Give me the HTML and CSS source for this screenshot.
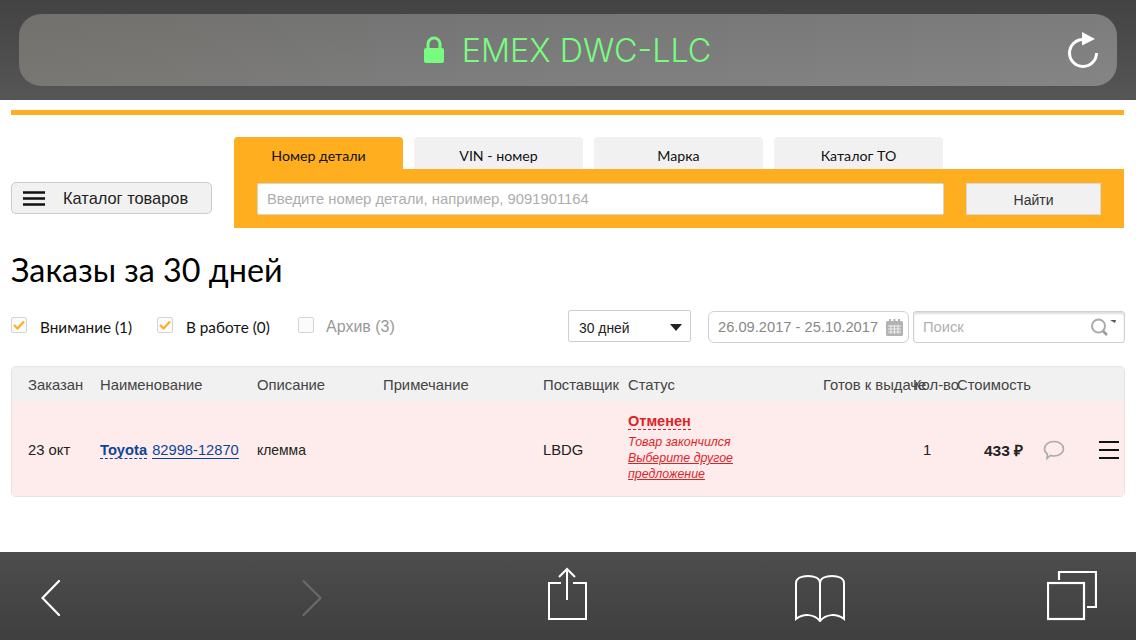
FILE: index.html
```html
<!DOCTYPE html>
<html lang="ru">
<head>
<meta charset="utf-8">
<title>Заказы за 30 дней</title>
<link rel="stylesheet" href="styles.css">
</head>
<body>
<header class="topbar">
  <div class="urlbar">
    <div class="site">
      <svg class="lock" width="22" height="28" viewBox="0 0 22 28"><path d="M5 13V8a6 6 0 0 1 12 0v5" fill="none" stroke="#78fc80" stroke-width="3"/><rect x="1" y="12" width="20" height="15" rx="2" fill="#78fc80"/></svg>
      <span class="site-name">EMEX DWC-LLC</span>
    </div>
    <svg class="reload" width="32" height="36" viewBox="0 0 32 36"><path d="M15 7.500A13.500 13.500 0 1 0 28.500 21" fill="none" stroke="#fff" stroke-width="3"/><path d="M14 0l13 7-13 6.500z" fill="#fff"/></svg>
  </div>
</header>

<main class="page">
  <div class="rule"></div>
  <section class="search-row">
    <button class="catalog-btn">
      <svg width="22" height="15" viewBox="0 0 22 15"><path d="M0 1.500h22M0 7.500h22M0 13.500h22" stroke="#111" stroke-width="2.400"/></svg>
      <span>Каталог товаров</span>
    </button>
    <div class="search-box">
      <div class="tabs">
        <div class="tab tab-active">Номер детали</div>
        <div class="tab">VIN - номер</div>
        <div class="tab">Марка</div>
        <div class="tab">Каталог ТО</div>
      </div>
      <div class="search-panel">
        <div class="part-input">Введите номер детали, например, 9091901164</div>
        <div class="find-btn">Найти</div>
      </div>
    </div>
  </section>

  <h1 class="title">Заказы за 30 дней</h1>

  <section class="filters">
    <div class="checks">
      <label class="check check-1"><span class="box"><svg width="12" height="10" viewBox="0 0 12 10"><path d="M1 5l3.500 3.500L11 1.500" fill="none" stroke="#ffae1f" stroke-width="2.200"/></svg></span>Внимание (1)</label>
      <label class="check check-2"><span class="box"><svg width="12" height="10" viewBox="0 0 12 10"><path d="M1 5l3.500 3.500L11 1.500" fill="none" stroke="#ffae1f" stroke-width="2.200"/></svg></span>В работе (0)</label>
      <label class="check check-off"><span class="box"></span>Архив (3)</label>
    </div>
    <div class="controls">
      <div class="select">30 дней<span class="caret"></span></div>
      <div class="dates">26.09.2017 - 25.10.2017
        <svg width="17" height="17" viewBox="0 0 17 17"><rect y="2" width="17" height="15" rx="1.500" fill="#b3b3b3"/><path d="M4 0v4M8.500 0v4M13 0v4" stroke="#b3b3b3" stroke-width="2"/><path d="M2 7h13M2 10h13M2 13h13M5 6v9M8.500 6v9M12 6v9" stroke="#eee" stroke-width="1"/></svg>
      </div>
      <div class="find">Поиск
        <svg width="34" height="18" viewBox="0 0 34 18"><circle cx="8.500" cy="8" r="6.500" fill="none" stroke="#aaa" stroke-width="2"/><path d="M13 13l4 4" stroke="#999" stroke-width="2.500"/><path d="M20 2h6l-1 3z" fill="#555"/></svg>
      </div>
    </div>
  </section>

  <section class="orders">
    <div class="grid grid-head">
      <div>Заказан</div><div>Наименование</div><div>Описание</div><div>Примечание</div><div>Поставщик</div><div>Статус</div><div class="nowrap">Готов к выдаче</div><div class="nowrap">Кол-во</div><div>Стоимость</div>
    </div>
    <div class="grid grid-row">
      <div>23 окт</div>
      <div class="part"><a class="brand">Toyota</a> <a class="number">82998-12870</a></div>
      <div class="desc">клемма</div>
      <div></div>
      <div>LBDG</div>
      <div class="status">
        <a class="state">Отменен</a>
        <p class="note">Товар закончился</p>
        <a class="note note-link">Выберите другое<br>предложение</a>
      </div>
      <div></div>
      <div class="qty">1</div>
      <div class="cost">
        <b class="price">433 ₽</b>
        <svg class="bubble" width="22" height="20" viewBox="0 0 22 20"><path d="M11 1.500c5.300 0 9.500 3.300 9.500 7.300S16.300 16 11 16c-1.300 0-2.500-.2-3.600-.5L4 18.500l.4-4.300C2.500 12.900 1.500 11 1.500 8.800 1.500 4.800 5.700 1.500 11 1.500z" fill="none" stroke="#aaa" stroke-width="1.600"/></svg>
        <svg class="row-menu" width="20" height="18" viewBox="0 0 20 18"><path d="M0 1h20M0 9h20M0 17h20" stroke="#111" stroke-width="2"/></svg>
      </div>
    </div>
  </section>
</main>

<footer class="toolbar">
  <svg class="tool-back" width="20" height="36" viewBox="0 0 20 36"><path d="M18 1L1.500 18 18 35" fill="none" stroke="#fff" stroke-width="2.200" stroke-linecap="round"/></svg>
  <svg class="tool-next" width="20" height="36" viewBox="0 0 20 36"><path d="M1.500 1L18.500 18 1.500 35" fill="none" stroke="#6a6a6a" stroke-width="2.200" stroke-linecap="round"/></svg>
  <svg class="tool-share" width="40" height="54" viewBox="0 0 40 54"><path d="M13 16H1v36h37V16H25M19 33V2M11 10l8-8 8 8" fill="none" stroke="#fff" stroke-width="2"/></svg>
  <svg class="tool-book" width="50" height="48" viewBox="0 0 50 48"><path d="M25 47V9C25 4 19 2 13 2 7 2 1 4 1 9v36c8-6 18-5 24 2 6-7 16-8 24-2V9c0-5-6-7-12-7s-12 2-12 7" fill="none" stroke="#fff" stroke-width="2"/></svg>
  <svg class="tool-tabs" width="50" height="50" viewBox="0 0 50 50"><path d="M12 9V1h37v35h-9" fill="none" stroke="#fff" stroke-width="2.200"/><rect x="1" y="12" width="36" height="36" fill="none" stroke="#fff" stroke-width="2.200"/></svg>
</footer>
</body>
</html>
```
FILE: styles.css
```css
* { box-sizing: border-box; }
html, body { margin: 0; height: 100%; }
body {
  width: 1136px; height: 640px; overflow: hidden;
  display: flex; flex-direction: column;
  font-family: "Liberation Sans", Arial, sans-serif;
  background: #fff; color: #222;
}
.topbar {
  height: 100px; flex: none; padding: 14px 19px;
  background: linear-gradient(180deg, #434343, #565656);
}
.urlbar {
  height: 72px; width: 1098px; border-radius: 22px;
  background: linear-gradient(90deg, rgba(120, 115, 100, .3), rgba(120, 115, 100, 0) 35%), linear-gradient(175deg, #707070, #858585);
  position: relative; display: flex; align-items: center; justify-content: center;
}
.site { display: flex; align-items: center; gap: 17px; padding-right: 2px; }
.lock { display: block; }
.site-name { font: 300 32.300px/40px Inter, sans-serif; color: #78fc80; padding-top: 1px; }
.reload { position: absolute; right: 17px; top: 18px; }

.page { flex: 1; padding: 10px 11px 0 11px; min-height: 0; }
.rule { height: 5px; background: #ffae1f; width: 1113px; }
.search-row { display: flex; align-items: flex-end; gap: 22px; margin-top: 22px; }
.catalog-btn {
  width: 201px; height: 32px; margin-bottom: 14px; padding: 0 0 0 11px;
  display: flex; align-items: center; gap: 18px;
  background: #f1f1f1; border: 1px solid #cfcbc0; border-radius: 5px;
  font: 16.400px "Liberation Sans", Arial, sans-serif; color: #222;
}
.search-box { width: 890px; }
.tabs { display: flex; gap: 11px; height: 32px; }
.tab {
  width: 169px; height: 32px; border-radius: 4px 4px 0 0; background: #f1f1f1;
  text-align: center; font: 14.200px/38px Lato, "Open Sans", sans-serif; color: #111;
}
.tab-active { background: #ffae1f; }
.search-panel {
  height: 59px; background: #ffae1f; padding: 14px 23px 0 23px;
  display: flex; gap: 22px;
}
.part-input {
  width: 688px; height: 32px; background: #fff; border: 1px solid #d5d5d5; border-radius: 2px;
  padding-left: 9px; font-size: 14.800px; line-height: 31px; color: #adadad;
}
.find-btn {
  width: 135px; height: 32px; background: #f1f1f1; border: 1px solid #d8d8d8;
  text-align: center; font-size: 14px; line-height: 32px; color: #333;
}
.title {
  margin: 23px 0 0; font: 400 32.300px/38px Lato, "Open Sans", sans-serif; color: #000;
}
.filters { display: flex; justify-content: space-between; margin-top: 21px; height: 33px; }
.checks { display: flex; align-items: center; font: 15.300px Lato, "Open Sans", sans-serif; color: #111; }
.check { display: flex; align-items: center; }
.check-1 { width: 146px; }
.check-2 { width: 141px; }
.check-off { color: #999; font-family: "Liberation Sans", Arial, sans-serif; font-size: 16px; }
.box {
  width: 16px; height: 16px; margin-right: 13px; border: 1px solid #d4d4d4; border-radius: 2px; background: #fbfbfb;
  display: flex; align-items: center; justify-content: center; margin-top: -3px;
}
.check-off .box { margin-right: 12px; }
.controls { display: flex; gap: 4px; font-size: 14.700px; }
.select {
  width: 123px; height: 32px; margin-right: 13px; position: relative; padding: 0 10px;
  border: 1px solid #d0d0c8; border-radius: 2px; font-size: 13.900px; line-height: 34px; color: #222; background: #fff;
}
.caret {
  position: absolute; right: 8px; top: 13px; width: 0; height: 0;
  border-left: 6px solid transparent; border-right: 6px solid transparent; border-top: 7px solid #222;
}
.dates {
  width: 201px; height: 32px; margin-top: 1px; padding: 0 5px 0 9px;
  border: 1px solid #d0d0d0; border-radius: 6px; color: #888; line-height: 29px;
  display: flex; align-items: center; justify-content: space-between;
}
.find {
  width: 212px; height: 32px; margin-top: 1px; padding: 0 0 0 9px;
  border: 1px solid #d0d0d0; border-radius: 3px; box-shadow: inset 0 2px 2px #ddd;
  color: #b0b0b0; line-height: 29px;
  display: flex; align-items: center; justify-content: space-between;
}
.orders {
  margin-top: 23px; width: 1114px; height: 131px; border: 1px solid #e4e4e4; border-radius: 5px; overflow: hidden;
  font-size: 14.800px; color: #222;
}
.grid {
  display: grid; grid-template-columns: 72px 157px 126px 160px 85px 195px 90px 44px 1fr;
  padding-left: 16px;
}
.grid-head { height: 35px; background: #f1f1f1; align-items: center; color: #444; }
.grid-row { height: 94px; background: #feecec; align-items: center; color: #222; padding-top: 1px; }
.nowrap { white-space: nowrap; }
.desc { font-size: 13.900px; }
.part { white-space: nowrap; font-size: 14.700px; }
.brand { color: #0d4596; font-weight: 700; border-bottom: 1px dashed #0d4596; }
.number { color: #0d4596; border-bottom: 1px solid #0d4596; margin-left: 1px; }
.status { align-self: start; padding-top: 10px; }
.state { color: #e01f26; font-size: 14.500px; font-weight: 700; border-bottom: 1px dashed #e01f26; }
.note { margin: 5px 0 0; color: #e01f26; font-size: 12.400px; line-height: 16px; font-style: italic; }
.note-link { display: block; margin: 0; text-decoration: underline; }
.qty { padding-left: 10px; }
.cost { display: flex; align-items: center; padding-left: 27px; }
.price { font-size: 15.500px; color: #222; white-space: nowrap; }
.bubble { margin-left: 20px; }
.row-menu { margin-left: 34px; }
.toolbar {
  height: 88px; flex: none; position: relative;
  background: linear-gradient(180deg, #4d4d4d, #3f3f3f);
}
.toolbar svg { position: absolute; }
.toolbar .tool-back { left: 41px; top: 28px; }
.toolbar .tool-next { left: 302px; top: 28px; }
.toolbar .tool-share { left: 548px; top: 15px; }
.toolbar .tool-book { left: 795px; top: 22px; }
.toolbar .tool-tabs { left: 1047px; top: 19px; }
```
